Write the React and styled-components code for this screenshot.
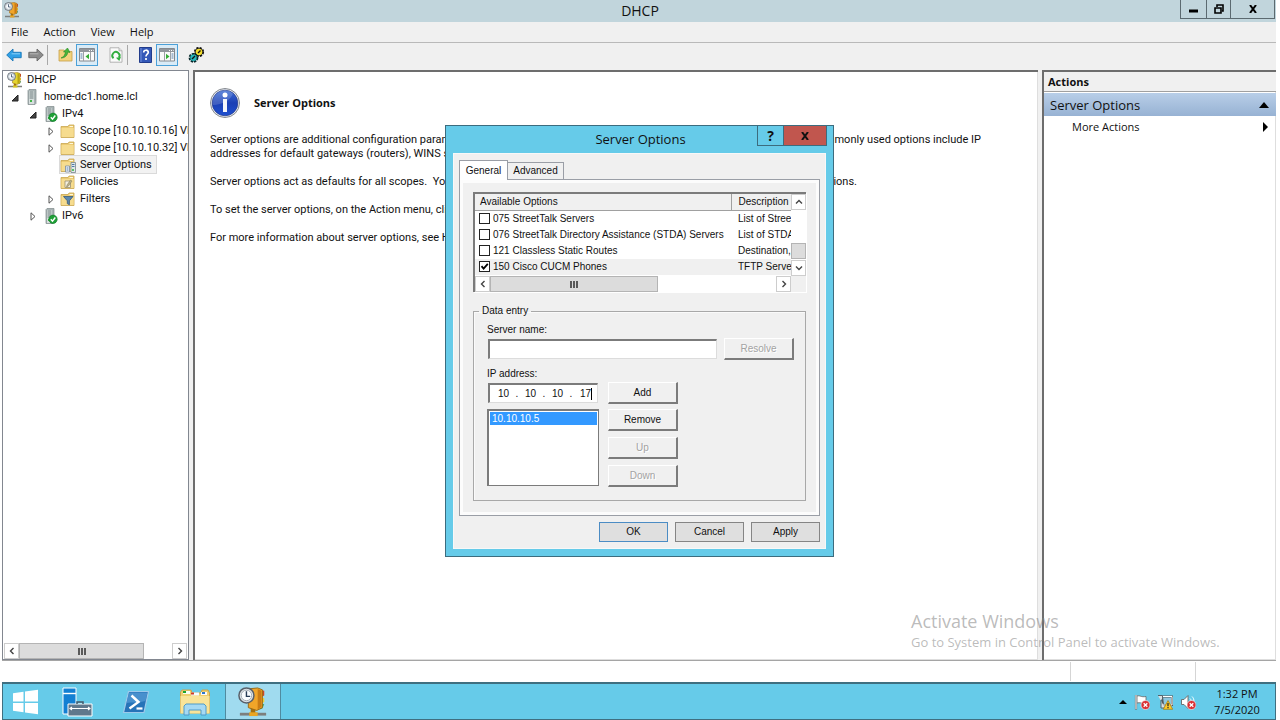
import React, { useState } from 'react';
import styled, { createGlobalStyle, css } from 'styled-components';

const GlobalStyle = createGlobalStyle`
  * {
    box-sizing: border-box;
  }
  html, body, #root {
    height: 100%;
    margin: 0;
  }
  body {
    background: #fff;
    color: #111;
    font: 11px/14px "Open Sans", "Noto Sans", sans-serif;
    overflow: hidden;
  }
  button, input {
    font: inherit;
    color: inherit;
    margin: 0;
    padding: 0;
    border: 0;
    background: none;
    border-radius: 0;
  }
  ul {
    list-style: none;
    margin: 0;
    padding: 0;
  }
  svg {
    display: block;
    flex: none;
  }
`;

const Desktop = styled.div`
  position: relative;
  display: flex;
  flex-direction: column;
  height: 100vh;
  padding: 0 4px 0 2px;
`;

const TitleBar = styled.header`
  display: flex;
  justify-content: space-between;
  height: 22px;
  background: #c1d5dc;
`;

const TitleSide = styled.div`
  flex: 1 0 0;
  display: flex;
  align-items: flex-start;
  justify-content: ${(p) => (p.$end ? 'flex-end' : 'flex-start')};
  padding: ${(p) => (p.$end ? '0 1px' : '2px')};
`;

const TitleText = styled.h1`
  margin: 0;
  font-size: 14px;
  line-height: 22px;
  font-weight: 400;
`;

const WindowButton = styled.button`
  display: flex;
  align-items: center;
  justify-content: center;
  width: ${(p) => p.$w}px;
  height: 19px;
  border: solid #5c6a70;
  border-width: 0 1px 1px 0;

  &:first-child {
    border-left-width: 1px;
  }
`;

const MenuBar = styled.nav`
  display: flex;
  gap: 15px;
  height: 21px;
  padding-left: 9px;
  background: #f0f0f0;
  border-bottom: 1px solid #b9b9b9;
`;

const MenuItem = styled.button`
  height: 20px;
  line-height: 20px;
`;

const ToolBar = styled.div`
  display: flex;
  align-items: center;
  height: 27px;
  padding: 0 1px 4px;
  background: #f0f0f0;
`;

const ToolButton = styled.button`
  display: flex;
  align-items: center;
  justify-content: center;
  width: 22px;
  height: 22px;
  ${(p) =>
    p.$on &&
    css`
      background: #d9ebf7;
      border: 1px solid #4ba0d8;
    `}
`;

const ToolSeparator = styled.span`
  width: 1px;
  height: 20px;
  margin-right: 6px;
  background: #a8a8a8;
`;

const ToolGap = styled.span`
  width: 7px;
`;

const Panes = styled.main`
  flex: 1;
  display: flex;
  gap: 4px;
  min-height: 0;
  background: #f0f0f0;
`;

const TreePane = styled.aside`
  display: flex;
  flex-direction: column;
  justify-content: space-between;
  width: 187px;
  background: #fff;
  border: 1px solid #828790;
  font-family: Roboto, sans-serif;
  overflow: hidden;
`;

const InfoPane = styled.section`
  flex: 1;
  min-width: 0;
  padding: 16px 15px;
  background: #fff;
  border: solid #6d6d6d;
  border-width: 2px 0 0 2px;
  box-shadow: inset -1px -1px #dedede;
`;

const ActionsPane = styled.aside`
  width: 234px;
  background: #fff;
  border: solid #6d6d6d;
  border-width: 2px 0 0 2px;
  box-shadow: inset -1px -1px #dedede;
`;

const TreeRow = styled.li`
  display: flex;
  align-items: center;
  height: 17px;
  padding-left: ${(p) => (p.$depth ? p.$depth * 18 - 12 : 4)}px;
  white-space: nowrap;
`;

const Twisty = styled.span`
  display: flex;
  flex: none;
  justify-content: center;
  width: 15px;
  padding: 2px 3px 0 0;
`;

const TreeLabel = styled.span`
  display: flex;
  align-items: center;
  gap: 4px;
  height: 17px;
  margin-left: ${(p) => (p.$leaf ? 15 : 0)}px;
  padding-right: 4px;
  ${(p) =>
    p.$selected &&
    css`
      background: #f2f2f2;
      box-shadow: 0 0 0 1px #dadada;
    `}
`;

const Bar = styled.div`
  display: flex;
  flex-direction: ${(p) => (p.$vertical ? 'column' : 'row')};
  background: #fff;
  ${(p) => (p.$vertical ? 'width: 15px;' : 'height: 16px;')}
  margin: ${(p) => (p.$inset ? '0 1px' : 0)};
`;

const BarButton = styled.button`
  display: flex;
  flex: none;
  align-items: center;
  justify-content: center;
  width: 15px;
  height: 16px;
  border: 1px solid #cdcdcd;
`;

const BarTrack = styled.div`
  flex: 1;
  display: flex;
  flex-direction: inherit;
`;

const BarSpace = styled.span`
  flex: ${(p) => p.$size};
`;

const BarThumb = styled.span`
  flex: ${(p) => p.$size};
  display: flex;
  align-items: center;
  justify-content: center;
  gap: 1px;
  background: #dcdcdc;
  border: 1px solid #b4b4b4;
`;

const Grip = styled.i`
  width: 2px;
  height: 7px;
  background: #5a5a5a;
`;

const InfoHead = styled.div`
  display: flex;
  align-items: center;
  gap: 14px;
  margin-bottom: 15px;
`;

const InfoTitle = styled.h2`
  margin: 0;
  font-size: 11px;
  font-weight: 700;
`;

const Paragraph = styled.p`
  max-width: 771px;
  margin: 0 0 14px;
  font-family: Roboto, sans-serif;
`;

const Line = styled.span`
  display: flex;
  justify-content: space-between;
  width: ${(p) => p.$w}px;
  max-width: 100%;
  white-space: pre;
`;

const ActionsHead = styled.h2`
  margin: 0;
  height: 20px;
  padding-left: 4px;
  font-size: 11px;
  line-height: 20px;
  font-weight: 700;
  background: #f0f0f0;
  border-bottom: 1px solid #a0a0a0;
`;

const ActionsGroup = styled.button`
  display: flex;
  align-items: center;
  justify-content: space-between;
  width: 100%;
  height: 23px;
  margin-top: 1px;
  padding: 0 7px 0 6px;
  font-size: 13px;
  background: linear-gradient(#b8cee8, #97b2d3);
`;

const ActionItem = styled.button`
  display: flex;
  align-items: center;
  justify-content: space-between;
  width: 100%;
  height: 22px;
  padding: 0 8px 0 28px;
`;

const StatusBar = styled.footer`
  display: flex;
  justify-content: flex-end;
  height: 22px;
  padding: 1px 0;
  background: #fff;
  border-top: 1px solid #a5a5a5;
`;

const StatusCell = styled.span`
  width: ${(p) => p.$w}px;
  border-left: 1px solid #d5d5d5;
`;

const TaskBar = styled.footer`
  display: flex;
  height: 38px;
  background: #66cbe9;
  border: 1px solid #3f6f80;
  border-top-width: 2px;
`;

const TaskButton = styled.button`
  display: flex;
  align-items: center;
  justify-content: center;
  width: ${(p) => p.$w}px;
  ${(p) =>
    p.$active &&
    css`
      background: #a0dbef;
      box-shadow: inset 1px 0 #4f8ba0, inset -1px 0 #4f8ba0;
    `}
`;

const Tray = styled.div`
  display: flex;
  align-items: center;
  gap: 7px;
  margin-left: auto;
`;

const TrayButton = styled.button`
  display: block;
`;

const Clock = styled.time`
  width: 68px;
  margin-right: 4px;
  line-height: 16px;
  text-align: center;
`;

const Watermark = styled.div`
  position: absolute;
  right: 51px;
  bottom: 69px;
  width: 318px;
  color: rgba(130, 130, 130, 0.55);
  font-size: 13px;
  line-height: 18px;
  white-space: nowrap;
  pointer-events: none;
`;

const WatermarkTitle = styled.strong`
  display: block;
  font-size: 18px;
  line-height: 24px;
  font-weight: 400;
`;

/* Server Options dialog */

const Dialog = styled.section`
  position: absolute;
  top: 125px;
  left: 50%;
  width: 389px;
  margin-left: -195px;
  background: #66cbe9;
  border: 1px solid #3c6c7e;
  font-family: "Liberation Sans", Arial, sans-serif;
  font-size: 10px;
`;

const DialogTitle = styled.div`
  display: flex;
  height: 27px;
  padding: 0 5px;
  font-family: "Open Sans", "Noto Sans", sans-serif;
`;

const DialogHeading = styled.h2`
  margin: 0;
  font-size: 13px;
  line-height: 26px;
  font-weight: 400;
`;

const DialogButton = styled.button`
  display: flex;
  align-items: center;
  justify-content: center;
  width: ${(p) => (p.$close ? 43 : 27)}px;
  height: 20px;
  font-size: 14px;
  font-weight: 700;
  background: ${(p) => (p.$close ? '#c1564e' : 'transparent')};
  border: 1px solid #3c6c7e;
  border-top: 0;

  & + & {
    border-left: 0;
  }
`;

const DialogBody = styled.div`
  margin: 0 7px 7px;
  padding: 6px 5px;
  background: #f0f0f0;
  border: 1px solid #f8f8f8;
`;

const Tabs = styled.div`
  display: flex;
  align-items: flex-end;
  height: 19px;
`;

const Tab = styled.button`
  height: ${(p) => (p.$active ? 20 : 17)}px;
  width: ${(p) => (p.$active ? 49 : 56)}px;
  background: ${(p) => (p.$active ? '#fff' : '#f0f0f0')};
  border: 1px solid #9a9ea6;
  border-bottom: 0;
  ${(p) => (p.$active ? 'margin-bottom: -1px; position: relative;' : 'border-left: 0;')}
`;

const TabPage = styled.div`
  padding: 12px 13px 14px;
  background: #f0f0f0;
  border: 1px solid #9a9ea6;
  box-shadow: inset 0 0 0 3px #fcfcfc;
`;

const OptionList = styled.div`
  display: grid;
  grid-template-columns: 1fr 15px;
  background: #f0f0f0;
  border: solid #7b7b7b;
  border-width: 2px 0 0 2px;
  box-shadow: 1px 1px #fff;
`;

const TableClip = styled.div`
  min-width: 0;
  height: 82px;
  overflow: hidden;
  background: #fff;
`;

const OptionTable = styled.table`
  width: 100%;
  table-layout: fixed;
  border-collapse: collapse;
`;

const OptionHead = styled.th`
  width: ${(p) => (p.$wide ? 'auto' : '60px')};
  height: 16px;
  padding: 0 0 0 ${(p) => (p.$wide ? 5 : 7)}px;
  font-weight: 400;
  text-align: left;
  background: #f0f0f0;
  border: solid #a0a0a0;
  border-width: 0 ${(p) => (p.$wide ? 1 : 0)}px 1px 0;
`;

const OptionRow = styled.tr`
  background: ${(p) => (p.$current ? '#f0f0f0' : '#fff')};
`;

const OptionCell = styled.td`
  height: 16px;
  padding: 0 0 0 ${(p) => (p.$wide ? 4 : 7)}px;
  white-space: nowrap;
  overflow: hidden;
`;

const OptionLabel = styled.label`
  display: flex;
  align-items: center;
  gap: 3px;
  height: 16px;
`;

const CheckBox = styled.input`
  appearance: none;
  flex: none;
  width: 11px;
  height: 11px;
  background: #fff;
  border: 1px solid #222;

  &:checked {
    background: #fff
      url("data:image/svg+xml,%3Csvg xmlns='http://www.w3.org/2000/svg' viewBox='0 0 9 9'%3E%3Cpath d='M1.5 4.2 3.6 6.6 7.8 1.8' fill='none' stroke='%23000' stroke-width='1.8'/%3E%3C/svg%3E");
  }
`;

const Group = styled.fieldset`
  display: flex;
  flex-direction: column;
  min-width: 0;
  height: 197px;
  margin: 12px 0 0;
  padding: 5px 11px 0 13px;
  border: 1px solid #a8a8a8;
  box-shadow: inset 1px 1px #fafafa;
`;

const Legend = styled.legend`
  margin-left: -8px;
  padding: 0 3px;
`;

const FieldLabel = styled.label`
  display: block;
  height: 15px;
`;

const FieldRow = styled.div`
  display: flex;
  align-items: flex-start;
  justify-content: ${(p) => (p.$spread ? 'space-between' : 'flex-start')};
  gap: ${(p) => (p.$spread ? 6 : 9)}px;
  margin-bottom: ${(p) => (p.$spread ? 7 : 5)}px;
`;

const sunken = css`
  background: #fff;
  border: 1px solid #dcdcdc;
  border-top: 2px solid #7b7b7b;
  border-left: 2px solid #7b7b7b;
`;

const TextInput = styled.input`
  ${sunken}
  width: 229px;
  height: 20px;
  margin: 1px 0 0 1px;
  padding: 0 4px;
  outline: 0;
`;

const IpBox = styled.div`
  ${sunken}
  display: flex;
  align-items: center;
  width: 110px;
  height: 20px;
  margin: 1px 1px 0 1px;
  padding-left: 4px;
`;

const Octet = styled.input`
  width: ${(p) => (p.$last ? 16 : 19)}px;
  text-align: ${(p) => (p.$last ? 'right' : 'center')};
  outline: 0;
`;

const Dot = styled.span`
  width: 8px;
  text-align: center;
`;

const Caret = styled.i`
  width: 1px;
  height: 12px;
  background: #000;
`;

const ListBox = styled.ul`
  width: 112px;
  height: 77px;
  padding: 1px;
  background: #fff;
  border: 2px solid #7b7b7b;
  border-right-width: 1px;
  border-bottom-width: 1px;
`;

const ListItem = styled.li`
  height: 13px;
  padding-left: 2px;
  line-height: 14px;
  color: #fff;
  background: #3399ff;
`;

const ButtonStack = styled.div`
  display: flex;
  flex-direction: column;
  gap: 6px;
`;

const Button = styled.button`
  width: 70px;
  height: 22px;
  background: #f0f0f0;
  border: 1px solid #fff;
  border-right: 2px solid #7b7b7b;
  border-bottom: 2px solid #7b7b7b;

  &:disabled {
    color: #a3a3a3;
    text-shadow: 1px 1px #fff;
  }
`;

const DialogFooter = styled.div`
  display: flex;
  justify-content: flex-end;
  gap: 7px;
  padding-top: 6px;
`;

const FooterButton = styled.button`
  width: 69px;
  height: 20px;
  background: #dfdfdf;
  border: 1px solid ${(p) => (p.$default ? '#4b8cc4' : '#858585')};
`;

/* icons */

const DhcpIcon = ({ size = 16, yellow }) => (
  <svg width={size} height={size} viewBox="0 0 32 32">
    <path d="M2 29h28" stroke="#7d7f7d" strokeWidth="3" />
    <path d="M16 22v7" stroke="#a5700f" strokeWidth="5" />
    <path d="M12 27h9v4h-9z" fill={yellow ? '#d6c623' : '#e9a522'} />
    <path d="m23 3 5 1v5l-4 2z" fill="#cf4826" />
    <path d="m24 11 4 1v4l-4 2z" fill="#f0cf35" />
    <path d="M23 19l5-1-2 5-3 1z" fill="#36a45b" />
    <path d="M11 2 21 1l5 2v19l-6 3-9-3z" fill={yellow ? '#e5d52f' : '#f1a529'} stroke="#946716" />
    <path d="m21 2 4 2v17l-4 3z" fill={yellow ? '#b9a414' : '#c97b15'} />
    <circle cx="9" cy="9" r="8" fill="#dce3e8" stroke="#596069" strokeWidth="1.6" />
    <circle cx="9" cy="9" r="5.6" fill="#f9fcff" stroke="#a1aab1" />
    <path d="M9 4.5V10h4" fill="none" stroke="#273d58" strokeWidth="1.5" />
  </svg>
);

const ServerIcon = ({ ok }) => (
  <svg width="16" height="16" viewBox="0 0 16 16">
    <path d="M4 1.5 5 .5h7v14l-1 1H4z" fill="#a8b3b4" stroke="#7f898b" strokeWidth=".7" />
    <path d="M5 2h5v13H5z" fill="#d7dfde" />
    <path d="M5.5 3h4M5.5 5h4M5.5 7h4M5.5 9h4" stroke="#6f7c7e" />
    <path d="M6 12h2" stroke="#41b646" strokeWidth="2" />
    {ok && (
      <>
        <circle cx="11" cy="11.3" r="4.2" fill="#1fa037" stroke="#0e7b26" strokeWidth=".6" />
        <path d="m8.8 11.2 1.7 1.9 2.8-3.6" fill="none" stroke="#fff" strokeWidth="1.4" />
      </>
    )}
  </svg>
);

const FolderIcon = ({ kind }) => (
  <svg width="16" height="16" viewBox="0 0 16 16">
    <path d="M1 3.5h7L9 2h5v12.5H1z" fill="#eccb73" stroke="#c9a64f" strokeWidth=".8" />
    <path d="M1.5 5h12.2v9H1.5z" fill="#f6dc8f" />
    <path d="M9.5 3h3.5v1h-3.5z" fill="#fff8dc" />
    {kind === 'options' && (
      <>
        <path d="M5.5 9h4v6h-4z" fill="#f8fbff" stroke="#76889c" strokeWidth=".8" />
        <path d="M11 5.5h4.5v10H11z" fill="#dfe7ea" stroke="#77858b" strokeWidth=".8" />
        <path d="M12 7.5h2.5m-2.5 2h2.5M6.5 11h2m-2 2h2" stroke="#4d79a9" />
        <path d="M12 13h2" stroke="#2db33c" strokeWidth="1.5" />
      </>
    )}
    {kind === 'policies' && (
      <>
        <path d="M5 7h5.5v6.5H5z" fill="#f5f1df" stroke="#9b9173" strokeWidth=".8" />
        <path d="m7 11 3.5-5 1.5 1-3.5 5-2 1z" fill="#b9b08a" stroke="#847a55" strokeWidth=".5" />
      </>
    )}
    {kind === 'filters' && (
      <path d="M3.5 5.5h9.5L9.4 9.8v4L7.3 12.6V9.8z" fill="#5b87ae" stroke="#36597a" strokeWidth=".8" />
    )}
  </svg>
);

const ArrowIcon = ({ forward }) => (
  <svg width="16" height="14" viewBox="0 0 16 14">
    <path
      d={forward ? 'M15.3 7 9 1v3.3H.8v5.4H9V13z' : 'M.7 7 7 1v3.3h8.2v5.4H7V13z'}
      fill={forward ? '#8c8c8c' : '#2fa0e6'}
      stroke={forward ? '#666' : '#1877b8'}
      strokeWidth=".9"
    />
    <path d={forward ? 'M2 5.8h8.4' : 'M5.6 5.8h8.4'} stroke={forward ? '#b5b5b5' : '#8bd1f7'} />
  </svg>
);

const UpFolderIcon = () => (
  <svg width="15" height="15" viewBox="0 0 15 15">
    <path d="M1 3h5l1 1.5h7V14H1z" fill="#f2d27c" stroke="#c7a048" strokeWidth=".8" />
    <path d="M3 11c3-1 4-3.5 4.5-6l-2 0 4-4 2.500 4.500-2.200-.5C9.500 8.500 7 11 3 11z" fill="#49b53b" stroke="#238a25" strokeWidth=".6" />
  </svg>
);

const PanelIcon = ({ right }) => (
  <svg width="16" height="15" viewBox="0 0 16 15">
    <path d="M.5 1.5h15v12.500H.5z" fill="#fafafa" stroke="#85898e" />
    <path d="M1 2h14v3H1z" fill="#92979d" />
    <path d="M10 3.500h1m1 0h1m1 0h.6" stroke="#fff" />
    <path d={right ? 'M5.500 5v9M11.500 5v9' : 'M4.500 5v9M11.500 5v9'} stroke="#9da1a5" />
    <path d={right ? 'M12.500 7h2m-2 2h2m-2 2h2' : 'M1.500 7h2m-2 2h2m-2 2h2'} stroke="#557ea8" />
    <path d={right ? 'M7 6.800v5.400L10.500 9.500z' : 'M10 6.800v5.400L6.500 9.500z'} fill="#35ad35" />
  </svg>
);

const RefreshIcon = () => (
  <svg width="14" height="16" viewBox="0 0 14 16">
    <path d="M1 .8h9l3 3v11.400H1z" fill="#fbfbfb" stroke="#aaa" strokeWidth=".9" />
    <path d="M10 .8v3h3" fill="#e4e4e4" stroke="#aaa" strokeWidth=".8" />
    <path d="M4.500 11.200A3.600 3.600 0 1 1 9.900 10.600" fill="none" stroke="#32ad40" strokeWidth="1.900" />
    <path d="m6.900 10.800 5-.8-1.600 4z" fill="#32ad40" />
  </svg>
);

const HelpIcon = () => (
  <svg width="13" height="16" viewBox="0 0 13 16">
    <path d="M.5.5h12v15H.5z" fill="#3458b8" stroke="#223c8b" />
    <path d="M2 1v14" stroke="#7592dc" />
    <path d="M4.700 5.500c0-3 4.600-3 4.600-.2C9.300 7.200 7 7.300 7 9.500M7 11v2" fill="none" stroke="#fff" strokeWidth="1.700" />
  </svg>
);

const GearsIcon = () => (
  <svg width="17" height="16" viewBox="0 0 17 16">
    <circle cx="11" cy="5" r="3.800" fill="#111" stroke="#111" strokeWidth="2.600" strokeDasharray="2 1" />
    <circle cx="11" cy="5" r="3.300" fill="#f2dd2c" />
    <circle cx="5.500" cy="10.800" r="3.600" fill="#06282b" stroke="#06282b" strokeWidth="2.600" strokeDasharray="2 1" />
    <circle cx="5.500" cy="10.800" r="3.200" fill="#29b9bd" />
    <path d="m4 12 3-3M10 6l2.500-2.500" stroke="#111" strokeWidth="1.400" />
  </svg>
);

const InfoIcon = () => (
  <svg width="30" height="30" viewBox="1 1 30 30">
    <defs>
      <linearGradient id="info" x2="0" y2="1">
        <stop offset="0" stopColor="#3f6fd6" />
        <stop offset=".5" stopColor="#1b3fb4" />
        <stop offset="1" stopColor="#1e50d0" />
      </linearGradient>
    </defs>
    <circle cx="16" cy="16" r="14.500" fill="#e4e7ec" stroke="#85898f" />
    <circle cx="16" cy="16" r="12.800" fill="url(#info)" stroke="#22398c" strokeWidth=".7" />
    <path d="M4 18A12 12 0 0 1 24 6.500C22 13 13 18 4 18z" fill="#fff" opacity=".17" />
    <circle cx="16" cy="8" r="2.500" fill="#fff" />
    <path d="M14 12h4v13h-4z" fill="#f4f6fb" />
  </svg>
);

const WindowsIcon = () => (
  <svg width="27" height="26" viewBox="0 0 27 26">
    <path d="M1 4.300 11.500 2.800V12.500H1zM13 2.600 26 .8v11.700H13zM1 14h10.500v9.300L1 21.800zm12 0h13v11.300L13 23.500z" fill="#fff" />
  </svg>
);

const ServerManagerIcon = () => (
  <svg width="31" height="30" viewBox="0 0 31 30">
    <path d="M1 1h13v26H1z" fill="#1380d3" stroke="#fff" />
    <path d="M1 6.500h13" stroke="#fff" strokeWidth="1.400" />
    <path d="M6 17h24v12H6z" fill="#60788c" stroke="#fff" />
    <path d="M15 17v-2h6v2" fill="none" stroke="#46596a" strokeWidth="1.500" />
    <path d="M9 21.500h18m-17-1.500-2 1.500 2 1.500m16-3 2 1.500-2 1.500" fill="none" stroke="#fff" strokeWidth="1.100" />
  </svg>
);

const PowerShellIcon = () => (
  <svg width="28" height="24" viewBox="0 0 28 24">
    <path d="M6.500 1.500h20L22 22.500H1.500z" fill="#2673b8" stroke="#9dc9ea" strokeWidth="1.200" />
    <path d="M7 2.500h18.500L23.500 11C17 13 10 12 4.500 13z" fill="#5b9fd8" opacity=".65" />
    <path d="m9.500 5.500 7 6.500L7.500 18.500" fill="none" stroke="#fff" strokeWidth="2.400" />
    <path d="M14.500 18.500h6" stroke="#fff" strokeWidth="2.200" />
  </svg>
);

const ExplorerIcon = () => (
  <svg width="32" height="28" viewBox="0 0 32 28">
    <path d="M1.500 4 3 2h9l1 3h9l1-3h6l1.500 3v20h-29z" fill="#efcf70" stroke="#caa54d" />
    <path d="M4 3h7v3H4z" fill="#f6fff2" />
    <path d="M12 4.500h8v3h-8zM22 4h6v3h-6z" fill="#f8fbff" />
    <path d="M4 3h3v2H4z" fill="#1da52e" />
    <path d="M12 4.500h3v2h-3z" fill="#cf3b27" />
    <path d="M23 4h3v2h-3z" fill="#2f78cf" />
    <path d="M1.500 8h29v17.500h-29z" fill="#f9e498" />
    <path d="M5 27v-9l2-2h18l2 2v9h-5v-5H10v5z" fill="#a5d9f3" stroke="#4f9bc8" />
  </svg>
);

const Cross = () => (
  <>
    <circle cx="11.500" cy="11" r="4.500" fill="#d92f33" stroke="#fff" strokeWidth=".6" />
    <path d="m9.700 9.200 3.600 3.600m0-3.600-3.600 3.600" stroke="#fff" strokeWidth="1.300" />
  </>
);

const FlagIcon = () => (
  <svg width="16" height="16" viewBox="0 0 16 16">
    <path d="M2 1v14.500" stroke="#666" strokeWidth="2.200" />
    <path d="M3 2c3-1 4 1.500 9 .5V9C8 10 6 8 3 9z" fill="#fff" stroke="#666" strokeWidth=".8" />
    <path d="M2 1v14" stroke="#fff" />
    <Cross />
  </svg>
);

const NetworkIcon = () => (
  <svg width="16" height="16" viewBox="0 0 16 16">
    <path d="M5 2.500h10V11H6z" fill="#8dc7df" stroke="#555" strokeWidth="2" />
    <path d="M5 2.500h10V11H6" fill="none" stroke="#fff" />
    <path d="M1 1.500h4.500V6H4v8h4" fill="#d9e0e3" stroke="#55626a" />
    <path d="m11 6.500 4.700 8.800H6.300z" fill="#ffc928" stroke="#a97700" strokeWidth=".7" />
    <path d="M11 9v3.300m0 .8v1.200" stroke="#222" strokeWidth="1.200" />
  </svg>
);

const VolumeIcon = () => (
  <svg width="16" height="16" viewBox="0 0 16 16">
    <path d="M1.500 5.500H4L8 1.500v13L4 10.500H1.500z" fill="#fff" stroke="#666" strokeWidth=".9" />
    <path d="M10 4.500c1 1 1.300 2 1.300 3M12 2.500c1.500 1.500 2 3 2 5" fill="none" stroke="#f4ffff" />
    <Cross />
  </svg>
);

const Triangle = ({ d, w = 8, h = 8, ...rest }) => (
  <svg width={w} height={h} viewBox={`0 0 ${w} ${h}`}>
    <path d={d} {...rest} />
  </svg>
);

const chevrons = {
  left: 'M5.500 1 2.500 4 5.500 7',
  right: 'M2.500 1 5.500 4 2.500 7',
  up: 'M1 5.500 4 2.500 7 5.500',
  down: 'M1 2.500 4 5.500 7 2.500',
};

const Chevron = ({ to }) => (
  <Triangle d={chevrons[to]} fill="none" stroke="#444" strokeWidth="1.400" />
);

const ScrollBar = ({ vertical, inset, before, thumb, after, grip }) => (
  <Bar $vertical={vertical} $inset={inset}>
    <BarButton aria-label={vertical ? 'Scroll up' : 'Scroll left'}>
      <Chevron to={vertical ? 'up' : 'left'} />
    </BarButton>
    <BarTrack>
      <BarSpace $size={before} />
      <BarThumb $size={thumb}>
        {grip && (
          <>
            <Grip />
            <Grip />
            <Grip />
          </>
        )}
      </BarThumb>
      <BarSpace $size={after} />
    </BarTrack>
    <BarButton aria-label={vertical ? 'Scroll down' : 'Scroll right'}>
      <Chevron to={vertical ? 'down' : 'right'} />
    </BarButton>
  </Bar>
);

const tree = [
  { label: 'DHCP', depth: 0, icon: <DhcpIcon yellow /> },
  { label: 'home-dc1.home.lcl', depth: 1, open: true, icon: <ServerIcon /> },
  { label: 'IPv4', depth: 2, open: true, icon: <ServerIcon ok /> },
  { label: 'Scope [10.10.10.16] VLAN', depth: 3, open: false, icon: <FolderIcon /> },
  { label: 'Scope [10.10.10.32] Vlan', depth: 3, open: false, icon: <FolderIcon /> },
  { label: 'Server Options', depth: 3, selected: true, icon: <FolderIcon kind="options" /> },
  { label: 'Policies', depth: 3, icon: <FolderIcon kind="policies" /> },
  { label: 'Filters', depth: 3, open: false, icon: <FolderIcon kind="filters" /> },
  { label: 'IPv6', depth: 2, open: false, icon: <ServerIcon ok /> },
];

const TreeNode = ({ node }) => (
  <TreeRow $depth={node.depth}>
    {node.open !== undefined && (
      <Twisty>
        {node.open ? (
          <Triangle d="M7 1v6H1z" fill="#444" stroke="#222" />
        ) : (
          <Triangle d="M2 .8v7.400L6 4.500z" h={9} fill="#fff" stroke="#555" />
        )}
      </Twisty>
    )}
    <TreeLabel $selected={node.selected} $leaf={node.depth > 0 && node.open === undefined}>
      {node.icon}
      {node.label}
    </TreeLabel>
  </TreeRow>
);

const initialOptions = [
  { name: '075 StreetTalk Servers', description: 'List of StreetTalk servers', checked: false },
  { name: '076 StreetTalk Directory Assistance (STDA) Servers', description: 'List of STDA servers', checked: false },
  { name: '121 Classless Static Routes', description: 'Destination, mask and router', checked: false },
  { name: '150 Cisco CUCM Phones', description: 'TFTP Server', checked: true },
];

const OptionsDialog = () => {
  const [options, setOptions] = useState(initialOptions);
  const [octets, setOctets] = useState(['10', '10', '10', '17']);
  const [serverName, setServerName] = useState('');

  const toggle = (index) =>
    setOptions(options.map((o, i) => (i === index ? { ...o, checked: !o.checked } : o)));

  const changeOctet = (index, value) =>
    setOctets(octets.map((o, i) => (i === index ? value : o)));

  return (
    <Dialog role="dialog" aria-labelledby="dialog-title">
      <DialogTitle>
        <TitleSide />
        <DialogHeading id="dialog-title">Server Options</DialogHeading>
        <TitleSide $end>
          <DialogButton>?</DialogButton>
          <DialogButton $close aria-label="Close">
            <Triangle d="M1 0 7 8M7 0 1 8" stroke="#111" strokeWidth="2" />
          </DialogButton>
        </TitleSide>
      </DialogTitle>
      <DialogBody>
        <Tabs role="tablist">
          <Tab role="tab" $active>General</Tab>
          <Tab role="tab">Advanced</Tab>
        </Tabs>
        <TabPage>
          <OptionList>
            <TableClip>
              <OptionTable>
                <thead>
                  <tr>
                    <OptionHead $wide>Available Options</OptionHead>
                    <OptionHead>Description</OptionHead>
                  </tr>
                </thead>
                <tbody>
                  {options.map((option, i) => (
                    <OptionRow key={option.name} $current={option.checked}>
                      <OptionCell $wide>
                        <OptionLabel>
                          <CheckBox
                            type="checkbox"
                            checked={option.checked}
                            onChange={() => toggle(i)}
                          />
                          {option.name}
                        </OptionLabel>
                      </OptionCell>
                      <OptionCell>{option.description}</OptionCell>
                    </OptionRow>
                  ))}
                </tbody>
              </OptionTable>
            </TableClip>
            <ScrollBar vertical before={34} thumb={15} after={1} />
            <ScrollBar before={0} thumb={165} after={118} grip />
          </OptionList>
          <Group>
            <Legend>Data entry</Legend>
            <FieldLabel htmlFor="server-name">Server name:</FieldLabel>
            <FieldRow $spread>
              <TextInput
                id="server-name"
                value={serverName}
                onChange={(e) => setServerName(e.target.value)}
              />
              <Button disabled>Resolve</Button>
            </FieldRow>
            <FieldLabel htmlFor="octet-0">IP address:</FieldLabel>
            <FieldRow>
              <IpBox>
                {octets.map((octet, i) => (
                  <React.Fragment key={i}>
                    {i > 0 && <Dot>.</Dot>}
                    <Octet
                      id={`octet-${i}`}
                      aria-label={`IP address part ${i + 1}`}
                      $last={i === 3}
                      value={octet}
                      onChange={(e) => changeOctet(i, e.target.value)}
                    />
                  </React.Fragment>
                ))}
                <Caret />
              </IpBox>
              <Button>Add</Button>
            </FieldRow>
            <FieldRow>
              <ListBox role="listbox" aria-label="IP addresses">
                <ListItem role="option" aria-selected="true">10.10.10.5</ListItem>
              </ListBox>
              <ButtonStack>
                <Button>Remove</Button>
                <Button disabled>Up</Button>
                <Button disabled>Down</Button>
              </ButtonStack>
            </FieldRow>
          </Group>
        </TabPage>
        <DialogFooter>
          <FooterButton $default>OK</FooterButton>
          <FooterButton>Cancel</FooterButton>
          <FooterButton>Apply</FooterButton>
        </DialogFooter>
      </DialogBody>
    </Dialog>
  );
};

const App = () => (
  <>
    <GlobalStyle />
    <Desktop>
      <TitleBar>
        <TitleSide>
          <DhcpIcon />
        </TitleSide>
        <TitleText>DHCP</TitleText>
        <TitleSide $end>
          <WindowButton $w={27} aria-label="Minimize">
            <Triangle d="M0 7h9" w={9} h={10} stroke="#000" strokeWidth="3" />
          </WindowButton>
          <WindowButton $w={24} aria-label="Restore">
            <Triangle d="M1 4h6v5H1zM3 3V1h6v6H8" w={10} h={10} fill="none" stroke="#000" strokeWidth="1.600" />
          </WindowButton>
          <WindowButton $w={44} aria-label="Close">
            <Triangle d="M1 0 7 8M7 0 1 8" stroke="#000" strokeWidth="2" />
          </WindowButton>
        </TitleSide>
      </TitleBar>
      <MenuBar>
        {['File', 'Action', 'View', 'Help'].map((item) => (
          <MenuItem key={item}>{item}</MenuItem>
        ))}
      </MenuBar>
      <ToolBar>
        <ToolButton aria-label="Back"><ArrowIcon /></ToolButton>
        <ToolButton aria-label="Forward"><ArrowIcon forward /></ToolButton>
        <ToolSeparator />
        <ToolButton aria-label="Up one level"><UpFolderIcon /></ToolButton>
        <ToolButton $on aria-label="Show or hide console tree"><PanelIcon /></ToolButton>
        <ToolGap />
        <ToolButton aria-label="Refresh"><RefreshIcon /></ToolButton>
        <ToolSeparator />
        <ToolButton aria-label="Help"><HelpIcon /></ToolButton>
        <ToolButton $on aria-label="Show or hide action pane"><PanelIcon right /></ToolButton>
        <ToolGap />
        <ToolButton aria-label="Options"><GearsIcon /></ToolButton>
      </ToolBar>
      <Panes>
        <TreePane>
          <ul>
            {tree.map((node) => (
              <TreeNode key={node.label} node={node} />
            ))}
          </ul>
          <ScrollBar inset before={0} thumb={124} after={28} grip />
        </TreePane>
        <InfoPane>
          <InfoHead>
            <InfoIcon />
            <InfoTitle>Server Options</InfoTitle>
          </InfoHead>
          <Paragraph>
            <Line $w={771}>
              <span>Server options are additional configuration parameters</span>
              <span>commonly used options include IP</span>
            </Line>
            <Line $w={771}>addresses for default gateways (routers), WINS servers</Line>
          </Paragraph>
          <Paragraph>
            <Line $w={647}>
              <span>Server options act as defaults for all scopes.  You can</span>
              <span>options.</span>
            </Line>
          </Paragraph>
          <Paragraph>To set the server options, on the Action menu, click</Paragraph>
          <Paragraph>For more information about server options, see Help.</Paragraph>
        </InfoPane>
        <ActionsPane>
          <ActionsHead>Actions</ActionsHead>
          <ActionsGroup>
            Server Options
            <Triangle d="M0 6 5 0l5 6z" w={10} h={6} />
          </ActionsGroup>
          <ActionItem>
            More Actions
            <Triangle d="M0 0v10l5-5z" w={5} h={10} />
          </ActionItem>
        </ActionsPane>
      </Panes>
      <StatusBar>
        <StatusCell $w={125} />
        <StatusCell $w={81} />
      </StatusBar>
      <TaskBar>
        <TaskButton $w={44} aria-label="Start"><WindowsIcon /></TaskButton>
        <TaskButton $w={60} aria-label="Server Manager"><ServerManagerIcon /></TaskButton>
        <TaskButton $w={58} aria-label="PowerShell"><PowerShellIcon /></TaskButton>
        <TaskButton $w={60} aria-label="File Explorer"><ExplorerIcon /></TaskButton>
        <TaskButton $w={56} $active aria-label="DHCP"><DhcpIcon size={30} /></TaskButton>
        <Tray>
          <TrayButton aria-label="Show hidden icons">
            <Triangle d="M0 4 4 0l4 4z" h={4} />
          </TrayButton>
          <TrayButton aria-label="Action Center"><FlagIcon /></TrayButton>
          <TrayButton aria-label="Network"><NetworkIcon /></TrayButton>
          <TrayButton aria-label="Volume"><VolumeIcon /></TrayButton>
          <Clock>
            1:32 PM
            <br />
            7/5/2020
          </Clock>
        </Tray>
      </TaskBar>
      <Watermark>
        <WatermarkTitle>Activate Windows</WatermarkTitle>
        Go to System in Control Panel to activate Windows.
      </Watermark>
      <OptionsDialog />
    </Desktop>
  </>
);

export default App;
